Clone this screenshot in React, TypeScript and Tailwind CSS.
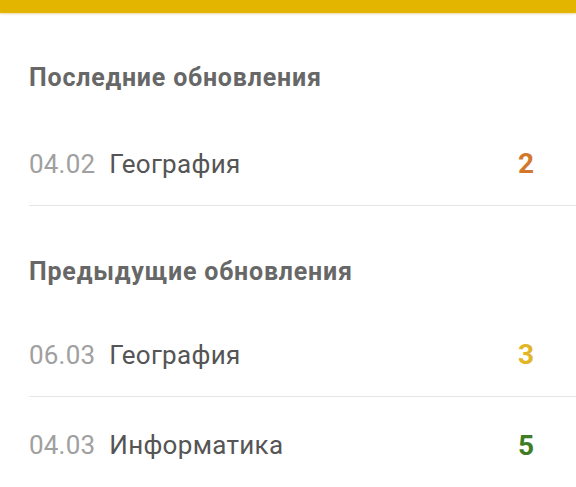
import React from 'react';

interface Grade {
  date: string;
  subject: string;
  mark: number;
}

const markColor: Record<number, string> = {
  2: 'text-[#d2782c]',
  3: 'text-[#e2b526]',
  4: 'text-[#3f7d24]',
  5: 'text-[#3f7d24]',
};

const recent: Grade[] = [{ date: '04.02', subject: 'География', mark: 2 }];

const previous: Grade[] = [
  { date: '06.03', subject: 'География', mark: 3 },
  { date: '04.03', subject: 'Информатика', mark: 5 },
];

function Row({ grade, divider }: { grade: Grade; divider: boolean }) {
  return (
    <div
      className={`flex h-[90px] items-center pt-[7px] pr-[42px] ${divider ? 'border-b border-[#e6e6e6]' : ''}`}
    >
      <span className="text-[26px] tracking-[0.2px] text-[#a0a0a0]">{grade.date}</span>
      <span className="ml-[14px] text-[26px] tracking-[0.3px] text-[#555555]">{grade.subject}</span>
      <span className={`ml-auto text-[28px] font-bold ${markColor[grade.mark]}`}>
        {grade.mark}
      </span>
    </div>
  );
}

export default function App() {
  return (
    <div className="h-[487px] w-[576px] overflow-hidden bg-white font-['Roboto',sans-serif]">
      <div className="h-[13px] bg-[#e3b500] shadow-[0_1px_2px_rgba(180,140,0,0.35)]" />
      <div className="pl-[29px]">
        <section className="pt-[50px]">
          <h2 className="text-[25px] leading-[30px] font-bold tracking-[0.8px] text-[#676767]">
            Последние обновления
          </h2>
          <div className="mt-[23px]">
            {recent.map((g) => (
              <Row key={g.date + g.subject} grade={g} divider />
            ))}
          </div>
        </section>
        <section className="pt-[51px]">
          <h2 className="text-[25px] leading-[30px] font-bold tracking-[0.8px] text-[#676767]">
            Предыдущие обновления
          </h2>
          <div className="mt-[20px]">
            {previous.map((g, i) => (
              <Row key={g.date + g.subject} grade={g} divider={i < previous.length - 1} />
            ))}
          </div>
        </section>
      </div>
    </div>
  );
}
